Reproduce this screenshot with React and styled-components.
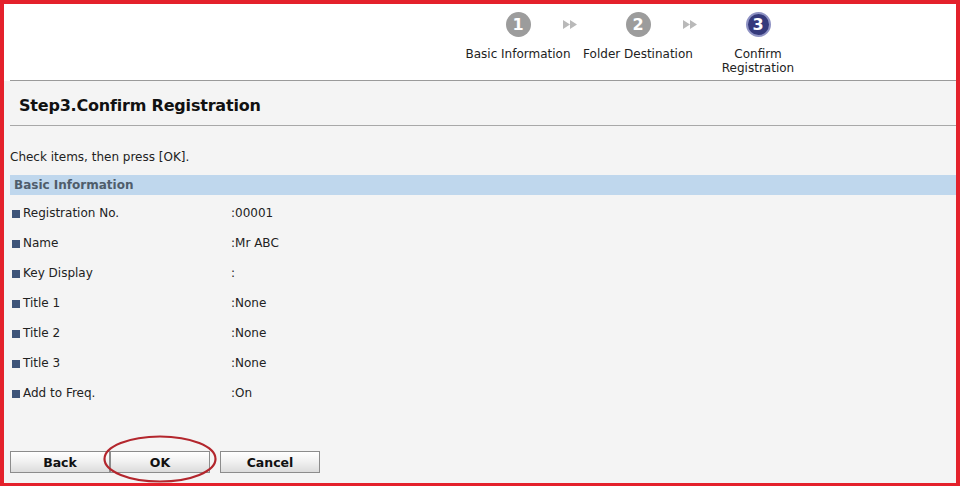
import React from "react";
import styled, { createGlobalStyle } from "styled-components";

const GlobalStyle = createGlobalStyle`
  html, body {
    margin: 0;
    padding: 0;
    background: #fff;
  }
  body {
    font-family: "DejaVu Sans", Verdana, sans-serif;
    font-size: 12px;
    color: #222;
  }
`;

const Frame = styled.div`
  box-sizing: border-box;
  width: 960px;
  height: 486px;
  border: 4px solid #e4212b;
  border-bottom-width: 3px;
  background: #f4f4f4;
  display: flex;
  flex-direction: column;
  overflow: hidden;
`;

const Header = styled.div`
  box-sizing: border-box;
  height: 77px;
  margin-left: 6px;
  padding-top: 8px;
  background: #fff;
  border-bottom: 1px solid #9a9a9a;
  display: flex;
  justify-content: flex-end;
  padding-right: 138px;
  box-shadow: -6px 0 0 #fff;
`;

const Steps = styled.div`
  display: flex;
`;

const Step = styled.div`
  width: 120px;
  display: flex;
  flex-direction: column;
  align-items: center;
`;

const CircleRow = styled.div`
  width: 100%;
  display: grid;
  grid-template-columns: 1fr 25px 1fr;
  align-items: center;
`;

const Circle = styled.div`
  grid-column: 2;
  box-sizing: border-box;
  width: 25px;
  height: 25px;
  border-radius: 50%;
  background: ${({ $active }) => ($active ? "#353a7c" : "#9c9c9c")};
  border: ${({ $active }) => ($active ? "2px solid #8f93c4" : "none")};
  color: #fff;
  font-weight: bold;
  font-size: 16px;
  display: flex;
  align-items: center;
  justify-content: center;
`;

const Arrow = styled.div`
  grid-column: 3;
  justify-self: end;
  display: flex;
  svg {
    display: block;
  }
`;

const StepLabel = styled.div`
  margin-top: 10px;
  text-align: center;
  line-height: 14px;
  font-size: 12px;
  color: #222;
  white-space: nowrap;
`;

const Main = styled.div`
  flex: 1;
  margin-left: 6px;
  display: flex;
  flex-direction: column;
`;

const TitleBar = styled.div`
  box-sizing: border-box;
  height: 45px;
  border-bottom: 1px solid #a8a8a8;
  display: flex;
  align-items: center;
  padding-left: 9px;
  padding-top: 4px;
`;

const Title = styled.h1`
  margin: 0;
  font-size: 16px;
  font-weight: bold;
  color: #111;
  letter-spacing: -0.2px;
`;

const Note = styled.p`
  margin: 24px 0 0;
  line-height: 14px;
`;

const SectionBar = styled.div`
  margin-top: 11px;
  height: 20px;
  background: #bfd7ed;
  padding-left: 4px;
  display: flex;
  align-items: center;
  font-weight: bold;
  color: #4f5d6b;
`;

const Rows = styled.div`
  margin-top: 3px;
`;

const Row = styled.div`
  display: grid;
  grid-template-columns: 221px 1fr;
  height: 30px;
  align-items: center;
`;

const Label = styled.div`
  display: flex;
  align-items: center;
  padding-left: 2px;
  &::before {
    content: "";
    width: 8px;
    height: 8px;
    margin-right: 3px;
    margin-top: 2px;
    background: #3d5479;
  }
`;

const Value = styled.div``;

const Buttons = styled.div`
  margin-top: auto;
  margin-bottom: 10px;
  display: flex;
`;

const Button = styled.button`
  box-sizing: border-box;
  width: 100px;
  height: 22px;
  margin: 0;
  padding: 0;
  border: 1px solid #8c8c8c;
  background: linear-gradient(#ffffff, #f2f2f2 45%, #dcdcdc);
  font-family: "DejaVu Sans", Verdana, sans-serif;
  font-size: 12.5px;
  font-weight: bold;
  color: #111;
  cursor: pointer;
`;

const Marked = styled.span`
  position: relative;
  display: flex;
  margin-right: 10px;
  svg {
    position: absolute;
    left: -8px;
    top: -17px;
    pointer-events: none;
  }
`;

const steps = [
  { n: 1, label: ["Basic Information"] },
  { n: 2, label: ["Folder Destination"] },
  { n: 3, label: ["Confirm", "Registration"], active: true },
];

const rows = [
  ["Registration No.", ":00001"],
  ["Name", ":Mr ABC"],
  ["Key Display", ":"],
  ["Title 1", ":None"],
  ["Title 2", ":None"],
  ["Title 3", ":None"],
  ["Add to Freq.", ":On"],
];

function DoubleArrow() {
  return (
    <svg width="15" height="9" viewBox="0 0 15 9">
      <path d="M0 0 L7 4.5 L0 9 Z M7 0 L14 4.5 L7 9 Z" fill="#b9b9b9" />
    </svg>
  );
}

export default function App() {
  return (
    <>
      <GlobalStyle />
      <Frame>
        <Header>
          <Steps>
            {steps.map((s, i) => (
              <Step key={s.n}>
                <CircleRow>
                  <Circle $active={s.active}>{s.n}</Circle>
                  {i < steps.length - 1 && (
                    <Arrow>
                      <DoubleArrow />
                    </Arrow>
                  )}
                </CircleRow>
                <StepLabel>
                  {s.label.map((l) => (
                    <div key={l}>{l}</div>
                  ))}
                </StepLabel>
              </Step>
            ))}
          </Steps>
        </Header>

        <Main>
          <TitleBar>
            <Title>Step3.Confirm Registration</Title>
          </TitleBar>
          <Note>Check items, then press [OK].</Note>
          <SectionBar>Basic Information</SectionBar>
          <Rows>
            {rows.map(([k, v]) => (
              <Row key={k}>
                <Label>{k}</Label>
                <Value>{v}</Value>
              </Row>
            ))}
          </Rows>

          <Buttons>
            <Button>Back</Button>
            <Marked>
              <Button>OK</Button>
              <svg width="116" height="50" viewBox="0 0 116 50">
                <ellipse
                  cx="58"
                  cy="25"
                  rx="55.5"
                  ry="22.5"
                  fill="none"
                  stroke="#b3262d"
                  strokeWidth="2.2"
                />
              </svg>
            </Marked>
            <Button>Cancel</Button>
          </Buttons>
        </Main>
      </Frame>
    </>
  );
}
